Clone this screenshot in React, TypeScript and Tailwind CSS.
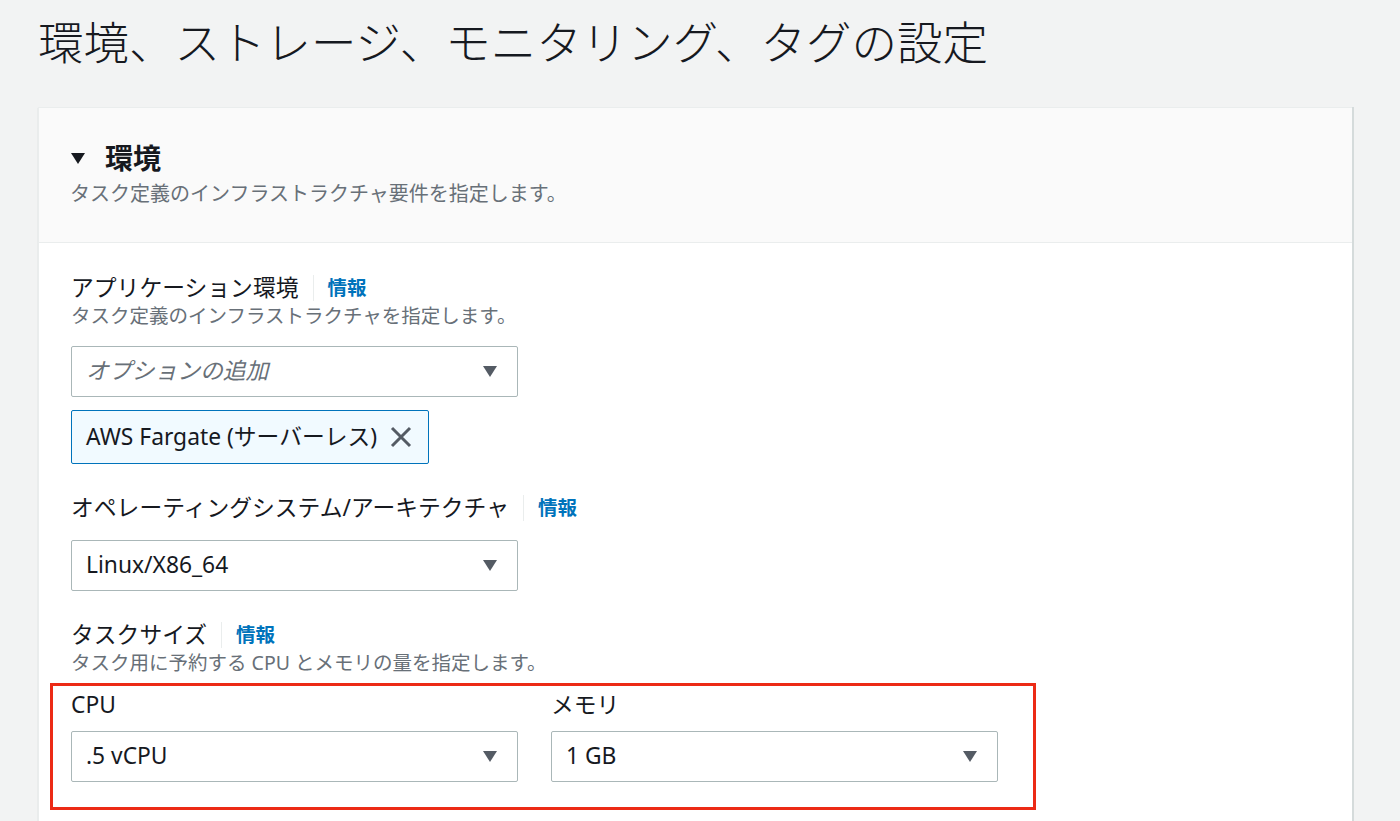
import React from "react";

const FONT = '"Noto Sans", "Noto Sans CJK JP", sans-serif';

function Caret({ className = "" }: { className?: string }) {
  return (
    <svg width="16" height="13" viewBox="0 0 16 13" className={className}>
      <path d="M1 1h14L8 12z" fill="currentColor" />
    </svg>
  );
}

function Label({ text, info }: { text: string; info?: boolean }) {
  return (
    <div className="flex items-center h-[28px]">
      <span className="text-[22.8px] text-[#16191f] leading-[28px]">{text}</span>
      {info && (
        <>
          <span className="mx-[14px] w-px h-[26px] bg-[#eaeded]" />
          <span className="text-[19.5px] font-bold text-[#0073bb] leading-[28px]">情報</span>
        </>
      )}
    </div>
  );
}

function Desc({ children, size = "body" }: { children: React.ReactNode; size?: "body" | "head" }) {
  return (
    <p className={size === "head" ? "text-[20px] text-[#687078] leading-[28px]" : "text-[19.5px] text-[#687078] leading-[28px]"}>
      {children}
    </p>
  );
}

function Select({ value, placeholder }: { value?: string; placeholder?: string }) {
  return (
    <div className="w-[447px] h-[51px] flex items-center justify-between pl-[14px] pr-[19px] bg-white border border-[#aab7b8] rounded-[2px]">
      {value ? (
        <span className="text-[22.8px] text-[#16191f]">{value}</span>
      ) : (
        <span className="text-[22.8px] italic text-[#687078]">{placeholder}</span>
      )}
      <Caret className="text-[#545b64]" />
    </div>
  );
}

export default function App() {
  return (
    <div className="min-h-screen bg-[#f2f3f3] pl-[38px] pr-[48px] pt-[15px]" style={{ fontFamily: FONT }}>
      <h1 className="text-[45.5px] leading-[54px] font-light text-[#16191f]">
        環境、ストレージ、モニタリング、タグの設定
      </h1>

      <div className="mt-[38px] bg-white border-t border-l border-[#eaeded] shadow-[2px_0_0_0_#d5dbdb,0_1px_1px_0_rgba(0,28,36,0.2)]">
        {/* header */}
        <div className="bg-[#fafafa] border-b border-[#eaeded] pl-[31px] pr-[32px] pt-[28px] pb-[34px]">
          <div className="flex items-center h-[44px] gap-[19px]">
            <Caret className="text-[#16191f]" />
            <h2 className="text-[28px] font-bold text-[#16191f] leading-[44px]">環境</h2>
          </div>
          <Desc size="head">タスク定義のインフラストラクチャ要件を指定します。</Desc>
        </div>

        {/* body */}
        <div className="px-[32px] pt-[31px] pb-[40px]">
          <Label text="アプリケーション環境" info />
          <Desc>タスク定義のインフラストラクチャを指定します。</Desc>
          <div className="mt-[16px]">
            <Select placeholder="オプションの追加" />
          </div>
          <div className="mt-[13px] inline-flex items-center gap-[12px] h-[54px] pl-[14px] pr-[15px] bg-[#f1faff] border border-[#0073bb] rounded-[2px]">
            <span className="text-[22.8px] text-[#16191f]">AWS Fargate (サーバーレス)</span>
            <svg width="24" height="24" viewBox="0 0 24 24" className="text-[#545b64]">
              <path d="M3 3l18 18M21 3L3 21" stroke="currentColor" strokeWidth="3" fill="none" />
            </svg>
          </div>

          <div className="mt-[30px]">
            <Label text="オペレーティングシステム/アーキテクチャ" info />
          </div>
          <div className="mt-[18px]">
            <Select value="Linux/X86_64" />
          </div>

          <div className="mt-[30px]">
            <Label text="タスクサイズ" info />
          </div>
          <Desc>タスク用に予約する CPU とメモリの量を指定します。</Desc>

          <div className="mt-[6px] -ml-[21px] w-fit border-[3px] border-[#ec2a16] pl-[18px] pr-[35px] pt-[5px] pb-[25px]">
            <div className="grid grid-cols-[447px_447px] gap-x-[33px]">
              <div>
                <Label text="CPU" />
                <div className="mt-[12px]">
                  <Select value=".5 vCPU" />
                </div>
              </div>
              <div>
                <Label text="メモリ" />
                <div className="mt-[12px]">
                  <Select value="1 GB" />
                </div>
              </div>
            </div>
          </div>
        </div>
      </div>
    </div>
  );
}
